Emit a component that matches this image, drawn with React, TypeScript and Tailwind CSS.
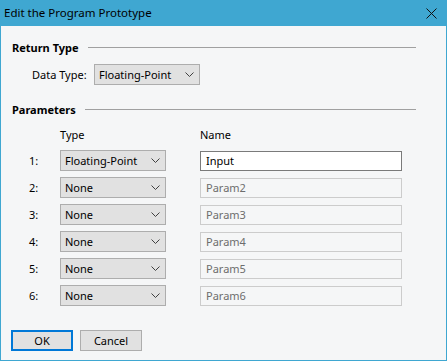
import React from "react";

const font = { fontFamily: '"Segoe UI", "Noto Sans", "Open Sans", sans-serif' };

function Chevron() {
  return (
    <svg width="9" height="5" viewBox="0 0 9 5" className="shrink-0">
      <path d="M0.5 0.5 L4.5 4.5 L8.5 0.5" fill="none" stroke="#404040" strokeWidth="1" />
    </svg>
  );
}

function Select({ value }: { value: string }) {
  return (
    <div className="flex h-[21px] w-[106px] items-center justify-between border border-[#adadad] bg-[#e1e1e1] pl-[4px] pr-[5px] text-[11px] text-black">
      <span>{value}</span>
      <Chevron />
    </div>
  );
}

function Field({ value, active }: { value: string; active?: boolean }) {
  return active ? (
    <div className="flex h-[20px] w-[202px] items-center border border-[#7a7a7a] bg-white pl-[5px] text-[11px] text-black">
      {value}
    </div>
  ) : (
    <div className="flex h-[20px] w-[202px] items-center border border-[#cccccc] bg-[#f5f6f7] pl-[5px] text-[11px] text-[#6d6d6d]">
      {value}
    </div>
  );
}

function Section({ title }: { title: string }) {
  return (
    <div className="flex h-[16px] items-center">
      <span className="text-[11px] font-bold text-black">{title}</span>
      <div className="ml-[9px] h-px flex-1 bg-[#a0a0a0]" />
    </div>
  );
}

const rows = [
  { n: "1:", type: "Floating-Point", name: "Input", active: true },
  { n: "2:", type: "None", name: "Param2" },
  { n: "3:", type: "None", name: "Param3" },
  { n: "4:", type: "None", name: "Param4" },
  { n: "5:", type: "None", name: "Param5" },
  { n: "6:", type: "None", name: "Param6" },
];

export default function App() {
  return (
    <div style={font} className="flex h-[361px] w-[447px] flex-col bg-[#3fa7d1] leading-none">
      <div className="flex h-[26px] shrink-0 items-center justify-between pl-[4px] pr-[10px] text-[11.5px] text-black">
        <span>Edit the Program Prototype</span>
        <svg width="11" height="11" viewBox="0 0 11 11">
          <path d="M0.5 0.5 L10.5 10.5 M10.5 0.5 L0.5 10.5" stroke="#111" strokeWidth="1" />
        </svg>
      </div>
      <div className="mx-px mb-px flex flex-1 flex-col bg-[#f5f6f7] pl-[11px] pr-[30px]">
        <div className="mt-[13px]">
          <Section title="Return Type" />
        </div>
        <div className="mt-[9px] flex items-center pl-[20px]">
          <span className="w-[62px] text-[11px] text-black">Data Type:</span>
          <Select value="Floating-Point" />
        </div>
        <div className="mt-[16px]">
          <Section title="Parameters" />
        </div>
        <div className="mt-[9px] flex h-[16px] items-center text-[11px] text-black">
          <span className="ml-[48px] w-[140px]">Type</span>
          <span>Name</span>
        </div>
        <div className="mt-[8px] flex flex-col gap-[6px]">
          {rows.map((r) => (
            <div key={r.n} className="flex items-center">
              <span className="ml-[17px] w-[31px] text-[11px] text-black">{r.n}</span>
              <Select value={r.type} />
              <div className="ml-[34px]">
                <Field value={r.name} active={r.active} />
              </div>
            </div>
          ))}
        </div>
        <div className="mt-[24px] flex gap-[7px]">
          <button className="-ml-px h-[21px] w-[62px] border-2 border-[#0078d7] bg-[#e1e1e1] text-[11px] text-black">
            OK
          </button>
          <button className="h-[21px] w-[62px] border border-[#adadad] bg-[#e1e1e1] text-[11px] text-black">
            Cancel
          </button>
        </div>
      </div>
    </div>
  );
}
